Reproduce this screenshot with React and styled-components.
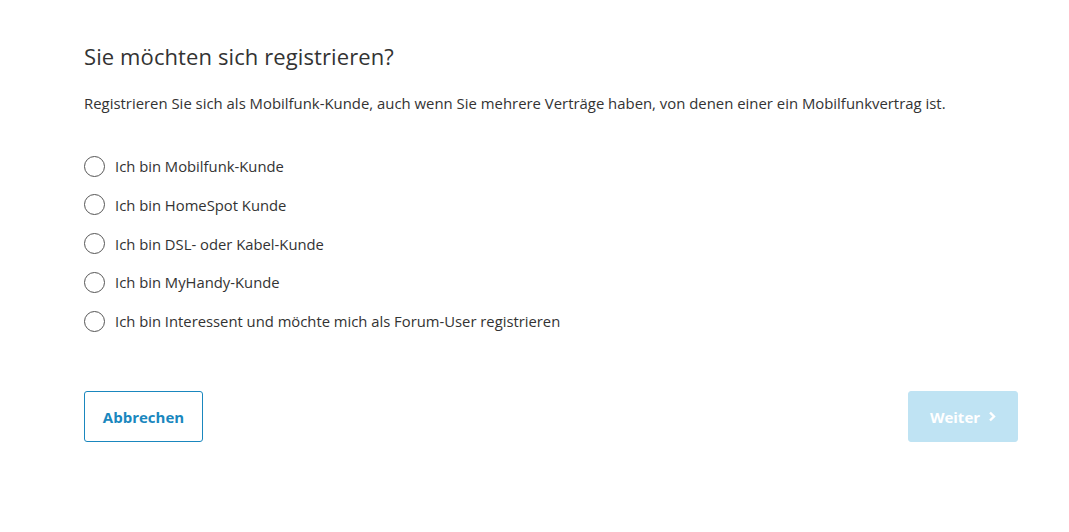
import React, { useState } from 'react';
import styled, { createGlobalStyle } from 'styled-components';

const GlobalStyle = createGlobalStyle`
  body {
    margin: 0;
    background: #fff;
    font-family: 'Open Sans', 'Liberation Sans', sans-serif;
    color: #333;
  }
`;

const Page = styled.div`
  width: 934px;
  padding: 40px 0 0 84px;
`;

const Title = styled.h1`
  margin: 0;
  font-size: 22px;
  font-weight: 400;
  line-height: 32px;
  color: #333;
  letter-spacing: 0.1px;
`;

const Intro = styled.p`
  margin: 21px 0 0;
  font-size: 14.9px;
  line-height: 20px;
  color: #333;
`;

const Options = styled.div`
  display: flex;
  flex-direction: column;
  gap: 14.8px;
  margin-top: 41px;
`;

const Option = styled.label`
  display: flex;
  align-items: center;
  gap: 10px;
  height: 24px;
  font-size: 14.8px;
  color: #333;
  cursor: pointer;
`;

const Circle = styled.span`
  width: 19px;
  height: 19px;
  border: 1px solid #555;
  border-radius: 50%;
  box-sizing: content-box;
  display: flex;
  align-items: center;
  justify-content: center;

  &::after {
    content: '';
    width: 11px;
    height: 11px;
    border-radius: 50%;
    background: ${(p) => (p.$checked ? '#0d8bc4' : 'transparent')};
  }
`;

const Actions = styled.div`
  display: flex;
  justify-content: space-between;
  margin-top: 58px;
`;

const Button = styled.button`
  height: 51px;
  padding: 0 20px;
  border-radius: 3px;
  font-family: inherit;
  font-size: 15px;
  font-weight: 700;
  display: flex;
  align-items: center;
  gap: 8px;
  cursor: pointer;
  border: 1px solid ${(p) => (p.$primary ? '#bfe3f3' : '#1a87be')};
  background: ${(p) => (p.$primary ? '#bfe3f3' : '#fff')};
  color: ${(p) => (p.$primary ? '#fff' : '#1a87be')};
  width: ${(p) => (p.$primary ? '110px' : '119px')};
  justify-content: center;
`;

const options = [
  'Ich bin Mobilfunk-Kunde',
  'Ich bin HomeSpot Kunde',
  'Ich bin DSL- oder Kabel-Kunde',
  'Ich bin MyHandy-Kunde',
  'Ich bin Interessent und möchte mich als Forum-User registrieren',
];

export default function App() {
  const [sel, setSel] = useState(null);
  return (
    <>
      <GlobalStyle />
      <Page>
        <Title>Sie möchten sich registrieren?</Title>
        <Intro>
          Registrieren Sie sich als Mobilfunk-Kunde, auch wenn Sie mehrere Verträge haben, von denen einer ein Mobilfunkvertrag ist.
        </Intro>
        <Options>
          {options.map((o, i) => (
            <Option key={o} onClick={() => setSel(i)}>
              <Circle $checked={sel === i} />
              {o}
            </Option>
          ))}
        </Options>
        <Actions>
          <Button>Abbrechen</Button>
          <Button $primary disabled={sel === null}>
            Weiter
            <svg width="8" height="11" viewBox="0 0 8 11">
              <path d="M2 1.5 L6 5.5 L2 9.5" fill="none" stroke="#fff" strokeWidth="2.4" />
            </svg>
          </Button>
        </Actions>
      </Page>
    </>
  );
}
